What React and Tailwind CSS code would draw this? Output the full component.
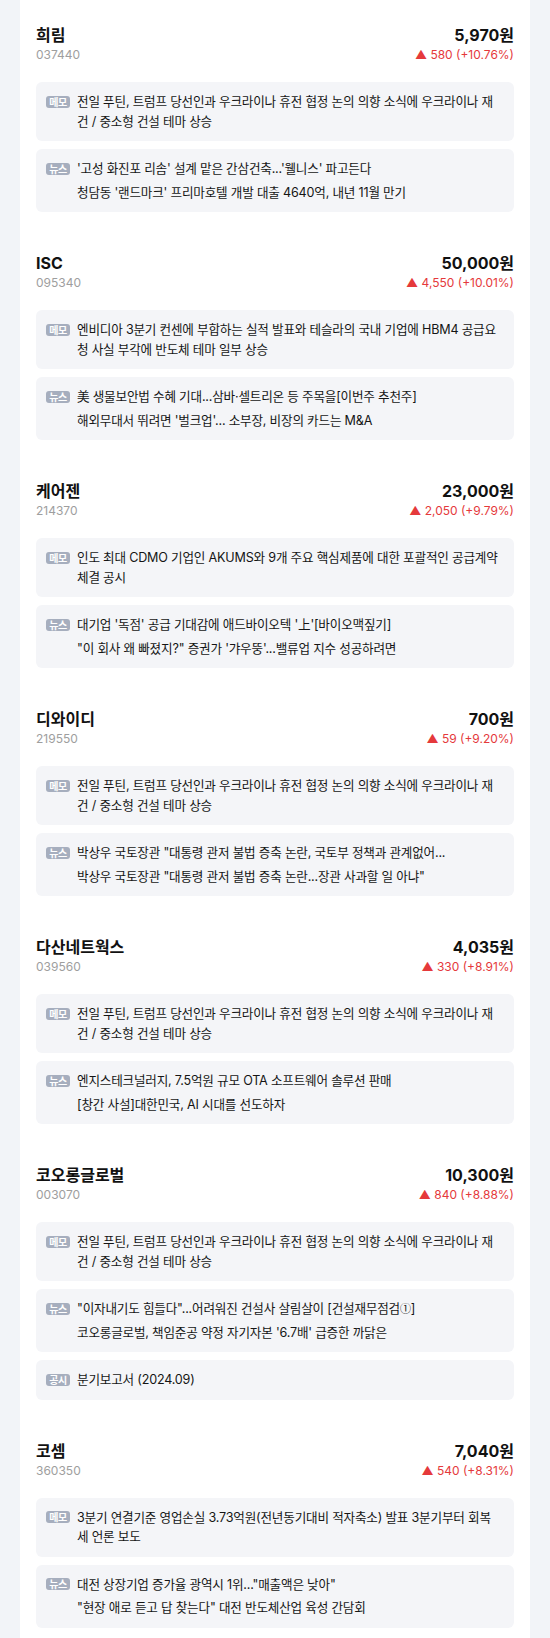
import React from "react";

const MEMO_RECON =
  "전일 푸틴, 트럼프 당선인과 우크라이나 휴전 협정 논의 의향 소식에 우크라이나 재건 / 중소형 건설 테마 상승";

const stocks = [
  {
    name: "희림",
    code: "037440",
    price: "5,970원",
    change: "▲ 580 (+10.76%)",
    items: [
      { tag: "메모", lines: [MEMO_RECON] },
      {
        tag: "뉴스",
        lines: [
          "'고성 화진포 리솜' 설계 맡은 간삼건축...'웰니스' 파고든다",
          "청담동 '랜드마크' 프리마호텔 개발 대출 4640억, 내년 11월 만기",
        ],
      },
    ],
  },
  {
    name: "ISC",
    code: "095340",
    price: "50,000원",
    change: "▲ 4,550 (+10.01%)",
    items: [
      {
        tag: "메모",
        lines: [
          "엔비디아 3분기 컨센에 부합하는 실적 발표와 테슬라의 국내 기업에 HBM4 공급요청 사실 부각에 반도체 테마 일부 상승",
        ],
      },
      {
        tag: "뉴스",
        lines: [
          "美 생물보안법 수혜 기대...삼바·셀트리온 등 주목을[이번주 추천주]",
          "해외무대서 뛰려면 '벌크업'... 소부장, 비장의 카드는 M&A",
        ],
      },
    ],
  },
  {
    name: "케어젠",
    code: "214370",
    price: "23,000원",
    change: "▲ 2,050 (+9.79%)",
    items: [
      {
        tag: "메모",
        lines: [
          "인도 최대 CDMO 기업인 AKUMS와 9개 주요 핵심제품에 대한 포괄적인 공급계약 체결 공시",
        ],
      },
      {
        tag: "뉴스",
        lines: [
          "대기업 '독점' 공급 기대감에 애드바이오텍 '上'[바이오맥짚기]",
          "\"이 회사 왜 빠졌지?\" 증권가 '갸우뚱'...밸류업 지수 성공하려면",
        ],
      },
    ],
  },
  {
    name: "디와이디",
    code: "219550",
    price: "700원",
    change: "▲ 59 (+9.20%)",
    items: [
      { tag: "메모", lines: [MEMO_RECON] },
      {
        tag: "뉴스",
        lines: [
          "박상우 국토장관 \"대통령 관저 불법 증축 논란, 국토부 정책과 관계없어...",
          "박상우 국토장관 \"대통령 관저 불법 증축 논란...장관 사과할 일 아냐\"",
        ],
      },
    ],
  },
  {
    name: "다산네트웍스",
    code: "039560",
    price: "4,035원",
    change: "▲ 330 (+8.91%)",
    items: [
      { tag: "메모", lines: [MEMO_RECON] },
      {
        tag: "뉴스",
        lines: [
          "엔지스테크널러지, 7.5억원 규모 OTA 소프트웨어 솔루션 판매",
          "[창간 사설]대한민국, AI 시대를 선도하자",
        ],
      },
    ],
  },
  {
    name: "코오롱글로벌",
    code: "003070",
    price: "10,300원",
    change: "▲ 840 (+8.88%)",
    items: [
      { tag: "메모", lines: [MEMO_RECON] },
      {
        tag: "뉴스",
        lines: [
          <>
            "이자내기도 힘들다"...어려워진 건설사 살림살이 [건설재무점검
            <span className="text-[11px]" style={{ fontFamily: "'Noto Sans CJK KR', sans-serif" }}>
              ①
            </span>
            ]
          </>,
          "코오롱글로벌, 책임준공 약정 자기자본 '6.7배' 급증한 까닭은",
        ],
      },
      { tag: "공시", lines: ["분기보고서 (2024.09)"] },
    ],
  },
  {
    name: "코셈",
    code: "360350",
    price: "7,040원",
    change: "▲ 540 (+8.31%)",
    items: [
      {
        tag: "메모",
        lines: [
          "3분기 연결기준 영업손실 3.73억원(전년동기대비 적자축소) 발표 3분기부터 회복세 언론 보도",
        ],
      },
      {
        tag: "뉴스",
        lines: [
          "대전 상장기업 증가율 광역시 1위...\"매출액은 낮아\"",
          "\"현장 애로 듣고 답 찾는다\" 대전 반도체산업 육성 간담회",
        ],
      },
    ],
  },
];

function Item({ item }) {
  return (
    <div className="flex items-start rounded-[6px] bg-[#f4f5f8] py-[10px] pl-[10px] pr-[12px]">
      <span className="mt-[3.5px] flex h-[12px] w-[24px] shrink-0 items-center justify-center rounded-[3px] bg-[#a6aebe] text-[10px] font-bold leading-[12px] tracking-[-0.5px] text-white">
        {item.tag}
      </span>
      <div className="ml-[7px] flex min-w-0 flex-1 flex-col gap-[4px] break-all text-[12.6px] leading-[19.5px] tracking-[-0.2px] text-[#151515]">
        {item.lines.map((l, i) => (
          <div key={i}>{l}</div>
        ))}
      </div>
    </div>
  );
}

function Stock({ s }) {
  return (
    <section className="pb-4 pt-[23px]">
      <div className="flex items-start justify-between">
        <div className="flex flex-col">
          <div className="text-[16px] font-bold leading-[24px] text-[#111]">{s.name}</div>
          <div className="text-[12px] leading-[16px] text-[#9e9e9e]">{s.code}</div>
        </div>
        <div className="flex flex-col items-end">
          <div className="text-[16px] font-bold leading-[24px] text-[#111]">{s.price}</div>
          <div className="text-[12px] leading-[16px] text-[#e5393b]">{s.change}</div>
        </div>
      </div>
      <div className="mt-[19px] flex flex-col gap-[8px]">
        {s.items.map((it, i) => (
          <Item key={i} item={it} />
        ))}
      </div>
    </section>
  );
}

export default function App() {
  return (
    <div
      className="min-h-screen bg-[#f2f4f8] px-5"
      style={{ fontFamily: "Inter, 'Noto Sans CJK KR', sans-serif" }}
    >
      <div className="bg-white px-4">
        {stocks.map((s) => (
          <Stock key={s.code} s={s} />
        ))}
      </div>
    </div>
  );
}
